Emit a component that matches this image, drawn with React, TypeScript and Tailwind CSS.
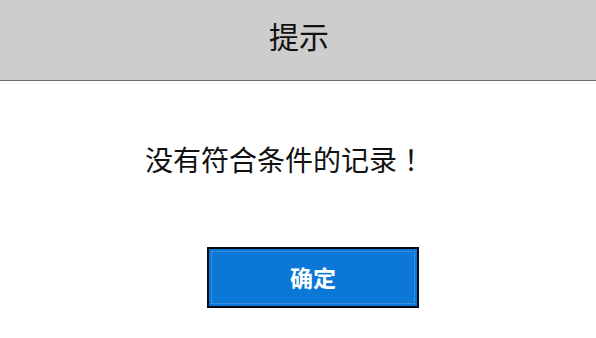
export default function App() {
  const cjk = { fontFamily: '"Noto Sans CJK SC", "Noto Sans", sans-serif' };
  const jp = { fontFamily: '"Noto Sans CJK JP", sans-serif' };
  return (
    <div className="w-[596px] h-[338px] bg-white overflow-hidden" style={cjk}>
      <div className="h-[81px] bg-[#cdcdcd] border-b border-[#6a6a6a] flex justify-center pt-[20px] pl-[2px]">
        <span className="text-[30px] leading-none text-[#111]">提示</span>
      </div>
      <div className="pt-[64px] pl-[145px]">
        <span className="text-[28px] leading-none text-[#111]">
          没有符合条件的记录<span style={jp}>！</span>
        </span>
      </div>
      <div className="pt-[71px] pl-[207px]">
        <div className="w-[212px] h-[61px] bg-[#0b78d8] border-2 border-[#050a14] p-[2px]">
          <div className="w-full h-full border border-dotted border-[#5b9fe0] flex items-center justify-center">
            <span className="text-[23px] leading-none text-white font-semibold">确定</span>
          </div>
        </div>
      </div>
    </div>
  );
}
